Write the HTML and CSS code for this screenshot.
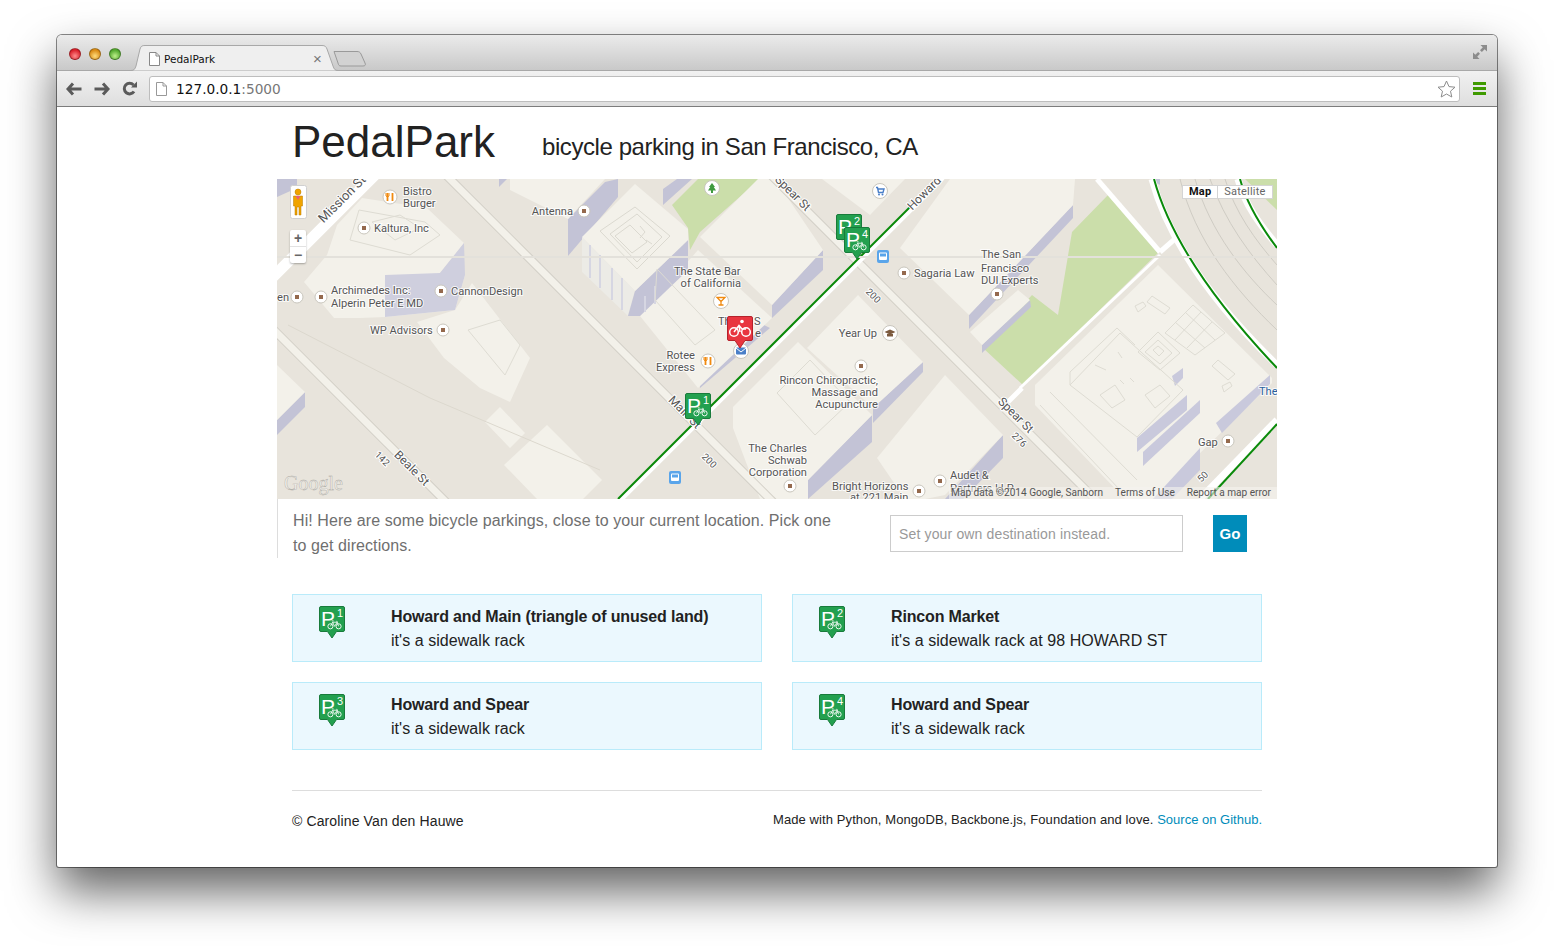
FILE: index.html
```html
<!DOCTYPE html>
<html lang="en">
<head>
    <meta charset="UTF-8">
    <title>PedalPark</title>
    <link rel="stylesheet" href="styles.css">
</head>
<body>
<div class="window">
    <!-- Browser chrome -->
    <div class="titlebar">
        <div class="lights">
            <span class="light red"></span>
            <span class="light yellow"></span>
            <span class="light green"></span>
        </div>
        <div class="tab">
            <svg class="tab-shape" width="212" height="26" viewBox="0 0 212 26"><path d="M0 25.500H1C4 25.500 5 24 6 21L10 4C11 1 12 .5 15 .5H192C195 .5 196 1.500 197 4L203 21C204 24 205 25.500 208 25.500H212" fill="#efefef" stroke="#a8a8a8"/></svg>
            <svg class="page-icon" width="11" height="14" viewBox="0 0 11 14"><path d="M.5.5H7L10.500 4V13.500H.5z" fill="#fff" stroke="#888"/><path d="M7 .5V4H10.500" fill="none" stroke="#888"/></svg>
            <span class="tab-title">PedalPark</span>
            <span class="tab-close">×</span>
        </div>
        <svg class="new-tab" width="34" height="17" viewBox="0 0 34 17"><path d="M1 1.500H24C26 1.500 27 2 28 4L32 13C33 15 32 16 30 16H8C6 16 5.500 15 5 13z" fill="#d2d2d2" stroke="#9a9a9a"/></svg>
        <svg class="fullscreen" width="14" height="14" viewBox="0 0 15 15"><path d="M15 0V7L12.500 4.500L9.500 7.500L7.500 5.500L10.500 2.500L8 0z" fill="#8c8c8c"/><path d="M0 15V8L2.500 10.500L5.500 7.500L7.500 9.500L4.500 12.500L7 15z" fill="#8c8c8c"/></svg>
    </div>
    <div class="toolbar">
        <svg class="nav-icon" width="16" height="14" viewBox="0 0 16 14"><path d="M7 1.500L2 7L7 12.500M2.500 7H15.500" fill="none" stroke="#5a5a5a" stroke-width="3"/></svg>
        <svg class="nav-icon" width="16" height="14" viewBox="0 0 16 14"><path d="M9 1.500L14 7L9 12.500M13.500 7H.5" fill="none" stroke="#5a5a5a" stroke-width="3"/></svg>
        <svg class="nav-icon" width="15" height="15" viewBox="0 0 15 15"><path d="M12 10.500A5.300 5.300 0 1 1 11.500 4" fill="none" stroke="#5a5a5a" stroke-width="3"/><path d="M9 6.500H15V.5z" fill="#5a5a5a"/></svg>
        <div class="omnibox">
            <svg class="page-icon-url" width="11" height="14" viewBox="0 0 11 14"><path d="M.5.5H7L10.500 4V13.500H.5z" fill="#fff" stroke="#999"/><path d="M7 .5V4H10.500" fill="none" stroke="#999"/></svg>
            <span class="url">127.0.0.1<span class="url-port">:5000</span></span>
            <svg class="star" width="19" height="18" viewBox="0 0 19 18"><path d="M9.500 1L12 6.600L18 7.200L13.500 11.200L14.800 17L9.500 14L4.200 17L5.500 11.200L1 7.200L7 6.600z" fill="#fff" stroke="#8c8c8c"/></svg>
        </div>
        <div class="menu-icon"><span></span><span></span><span></span></div>
    </div>

    <!-- Page -->
    <div class="page">
        <header class="header">
            <h1>PedalPark</h1>
            <h2>bicycle parking in San Francisco, CA</h2>
        </header>

        <div class="map">
            <svg class="map-canvas" width="1000" height="320" viewBox="277 179 1000 320">
                <defs>
                    <symbol id="bike" viewBox="0 0 16 11" overflow="visible">
                        <circle cx="3.500" cy="7.500" r="2.800" fill="none" stroke="#fff"/>
                        <circle cx="12.500" cy="7.500" r="2.800" fill="none" stroke="#fff"/>
                        <path d="M3.500 7.500L6 3H11L12.500 7.500M6 3L8 7.500L11 3M5 1.500H7M10.500 1.500L11 3" fill="none" stroke="#fff" stroke-width=".9"/>
                    </symbol>
                    <symbol id="pin" viewBox="0 0 26 33" overflow="visible">
                        <path d="M2 .5H24A1.500 1.500 0 0 1 25.500 2V24A1.500 1.500 0 0 1 24 25.500H17.500L13 32L8.500 25.500H2A1.500 1.500 0 0 1 .5 24V2A1.500 1.500 0 0 1 2 .5z" fill="#23a04f" stroke="#187b3b"/>
                        <use href="#bike" x="8" y="13.500" width="15" height="10"/>
                    </symbol>
                    <symbol id="dot" viewBox="-7 -7 14 14" overflow="visible">
                        <circle r="6" fill="#fff" stroke="#c9c6bd"/>
                        <rect x="-2" y="-2" width="4" height="4" fill="#94694d"/>
                    </symbol>
                    <symbol id="fork" viewBox="-7 -7 14 14" overflow="visible">
                        <circle r="7" fill="#fff" stroke="#c9c6bd"/>
                        <path d="M-2.500 -4V4M2.500 -4V4" stroke="#f08a10" stroke-width="1.800"/>
                        <path d="M-4 -4V-1L-2.500 0L-1 -1V-4" fill="none" stroke="#f08a10"/>
                    </symbol>
                    <symbol id="bus" viewBox="-6 -7 12 14" overflow="visible">
                        <rect x="-6" y="-7" width="12" height="13" rx="2" fill="#5aa5ea"/>
                        <rect x="-4" y="-4.500" width="8" height="7.500" rx="1" fill="#fff"/>
                        <rect x="-3" y="-3.500" width="6" height="3" fill="#5aa5ea"/>
                    </symbol>
                </defs>

                <rect x="277" y="179" width="1000" height="320" fill="#e8e4dc"/>

                <!-- parks -->
                <g fill="#cbdeaa">
                    <path d="M672 205L698 179H760L700 232L690 250L688 228z"/>
                    <path d="M1108 195L1158 253L1023 385L983 348L1032 295L1058 315L1072 232z"/>
                    <path d="M1245 179H1277V210z"/>
                </g>

                <!-- building faces -->
                <g fill="#c3c3d6">
                    <path d="M277 179H297V188L277 197z"/>
                    <path d="M499 179H507L499 187z"/>
                    <path d="M305 392V407L277 435V420z"/>
                    <path d="M568 219L605 182L618 179V197L568 256z"/>
                    <path d="M663 189L677 179H692L663 205z"/>
                    <path d="M823 250V270L772 318V305z"/>
                    <path d="M700 375L760 323L770 328L700 388z"/>
                    <path d="M872 415V442L808 499V480z"/>
                    <path d="M923 362V372L873 423V408z"/>
                    <path d="M1003 435V458L963 499H945z"/>
                    <path d="M1073 205L969 315V329L1073 218z"/>
                    <path d="M1030 300L982 345V353L1031 307z"/>
                    <path d="M1150 179H1160V185z"/>
                </g>

                <!-- buildings -->
                <g fill="#f3f1ea">
                    <path d="M304 282L327 255L337 225L362 198L427 208L464 243L440 273L465 275L455 310L385 317L360 318L334 318z"/>
                    <path d="M455 310L472 283L530 358L510 402L480 388L444 358L417 322z"/>
                    <path d="M485 422L500 407L525 433L510 448z"/>
                    <path d="M504 465L547 425L602 480L583 499H537z"/>
                    <path d="M277 365L305 392L277 420z"/>
                    <path d="M510 179H605L568 219L510 190z"/>
                    <path d="M700 237L758 179H775L823 250L772 305z"/>
                    <path d="M640 316L698 250L772 318L698 388z"/>
                    <path d="M733 407L798 342L872 415L808 480V499H760L733 428z"/>
                    <path d="M807 348L858 295L923 362L873 408z"/>
                    <path d="M877 458L945 375L1003 435L945 495L925 499H905z"/>
                    <path d="M950 179H1075L1073 205L969 315L900 248z"/>
                    <path d="M1030 300L982 345L970 332L1018 290z"/>
                    <path d="M822 179H905L870 215z"/>
                    <path d="M1035 385L1158 265L1272 378V383L1153 499H1125L1035 405z"/>
                </g>

                <!-- Kaltura block walls -->
                <path d="M385 275L440 273L464 243L465 275L455 310L385 317z" fill="#cfcfde"/>

                <!-- tower next to the park -->
                <path d="M582 237L635 291L628 316L582 272z" fill="#ecebe6"/>
                <path d="M635 291L688 240V270L640 316H628z" fill="#c3c3d6"/>
                <path d="M582 237L635 184L688 229V240L635 291z" fill="#f3f1ea"/>
                <path d="M590 245V278M600 255V288M612 268V300M622 278V310M645 296V312M655 286V304" fill="none" stroke="#d6d6e2" stroke-width="2"/>
                <g fill="none" stroke="#dbd9d0">
                    <path d="M600 231L635 207L670 236L637 269z"/>
                    <path d="M610 234L637 214L662 237L637 262z"/>
                    <path d="M615 236L630 225L647 242L632 253z"/>
                    <path d="M640 226L645 232L640 238M646 240L652 244"/>
                </g>

                <!-- big block faces -->
                <g fill="#c9c9dc">
                    <path d="M1137 438L1187 395V410L1137 452z"/>
                    <path d="M1143 452L1200 400V413L1143 466z"/>
                    <path d="M1270 375V384L1222 433L1216 423z"/>
                    <path d="M1200 448V470L1172 499H1153z"/>
                    <path d="M1172 376L1183 368V378L1175 386z"/>
                </g>

                <!-- building detail lines -->
                <g fill="none" stroke="#dedcd3">
                    <path d="M1070 385L1120 333L1183 390L1137 437z"/>
                    <path d="M1070 372L1117 328L1135 345"/>
                    <path d="M1070 372V385M1050 392L1137 480M1040 405L1120 490"/>
                    <path d="M1193 305L1225 333L1195 355L1165 333z"/>
                    <path d="M1185 312L1215 340M1175 322L1205 348M1201 312L1175 340M1212 322L1187 348"/>
                    <path d="M1138 352L1158 332L1180 353L1160 370z"/>
                    <path d="M1145 352L1158 340L1172 353L1160 364z"/>
                    <path d="M1153 350L1158 346L1164 351L1159 356z"/>
                    <path d="M1152 296L1170 308L1165 314L1147 302z"/>
                    <path d="M1135 306L1143 302L1146 306L1138 312z"/>
                    <path d="M1218 360L1235 374L1228 380L1212 366z"/>
                    <path d="M1222 386L1230 382L1232 386L1224 392z"/>
                    <path d="M1100 395L1115 385L1125 400L1112 408z"/>
                    <path d="M1145 395L1160 385L1170 396L1155 408z"/>
                    <path d="M1095 365L1106 370M1118 352L1122 358M1120 380L1124 384M1130 378L1134 382"/>
                    <path d="M777 393L810 360L850 402L815 435z"/>
                    <path d="M359 210L425 222L440 235L410 255L350 240z"/>
                    <path d="M372 222L400 215L420 228L395 240z"/>
                    <path d="M468 330L500 320L520 345L505 375z"/>
                    <path d="M657 269L715 330L695 345L655 300z"/>
                    <path d="M288 325L430 398L600 470" stroke="#dcd8ce"/>
                </g>

                <!-- streets -->
                <g fill="none" stroke-linecap="butt">
                    <path d="M440 169L790 519" stroke="#d2cfc7" stroke-width="9"/>
                    <path d="M440 169L790 519" stroke="#f3f1ea" stroke-width="7"/>
                    <path d="M765 169L1110 514" stroke="#d2cfc7" stroke-width="9"/>
                    <path d="M765 169L1110 514" stroke="#f3f1ea" stroke-width="7"/>
                    <path d="M267 323L453 509" stroke="#d2cfc7" stroke-width="9"/>
                    <path d="M267 323L453 509" stroke="#f3f1ea" stroke-width="7"/>
                    <path d="M267 283L381 169" stroke="#fff" stroke-width="11"/>
                    <path d="M1097 179L1160 252" stroke="#fff" stroke-width="5"/>
                    <path d="M1160 252L1176 238" stroke="#fff" stroke-width="5"/>
                    <path d="M1160 255L1020 388" stroke="#fff" stroke-width="3"/>
                    <path d="M1022 388L1008 402" stroke="#fff" stroke-width="5"/>
                    <!-- Howard -->
                    <path d="M620 501L943 178" stroke="#fff" stroke-width="4"/>
                    <path d="M618 499L910 207" stroke="#0a8a0a" stroke-width="2"/>
                    <!-- freeway -->
                    <g stroke="#fff" stroke-width="7">
                        <path d="M1152 179C1170 245 1220 310 1277 365"/>
                        <path d="M1238 179C1245 205 1260 225 1277 245"/>
                        <path d="M1277 420L1200 499"/>
                    </g>
                    <g stroke="#0a8a0a" stroke-width="2">
                        <path d="M1154 179C1172 245 1222 310 1277 368"/>
                        <path d="M1240 179C1247 205 1262 228 1277 248"/>
                        <path d="M1277 424L1208 499"/>
                    </g>
                    <g stroke="#cfccc4">
                        <path d="M1180 179C1195 240 1235 290 1277 330"/>
                        <path d="M1195 179C1210 232 1245 275 1277 305"/>
                        <path d="M1210 179C1225 222 1250 255 1277 285"/>
                        <path d="M1225 179C1235 212 1255 240 1277 265"/>
                    </g>
                    <path d="M277 257H1277" stroke="#e3e1db" stroke-width="2"/>
                </g>

                <!-- road names -->
                <g class="road-labels">
                    <text transform="translate(345 202) rotate(-45)" text-anchor="middle" class="road-name">Mission St</text>
                    <text transform="translate(927 196) rotate(-45)" text-anchor="middle">Howard</text>
                    <text transform="translate(790 196) rotate(45)" text-anchor="middle">Spear St</text>
                    <text transform="translate(682 415) rotate(45)" text-anchor="middle">Main St</text>
                    <text transform="translate(1013 418) rotate(45)" text-anchor="middle">Spear St</text>
                    <text transform="translate(409 471) rotate(45)" text-anchor="middle">Beale St</text>
                    <text transform="translate(380 461) rotate(45)" text-anchor="middle" class="road-no">142</text>
                    <text transform="translate(871 298) rotate(45)" text-anchor="middle" class="road-no">200</text>
                    <text transform="translate(707 463) rotate(45)" text-anchor="middle" class="road-no">200</text>
                    <text transform="translate(1017 442) rotate(45)" text-anchor="middle" class="road-no">276</text>
                    <text transform="translate(1205 479) rotate(-45)" text-anchor="middle" class="road-no">50</text>
                </g>

                <!-- places -->
                <g class="places">
                    <text x="403" y="195">Bistro</text>
                    <text x="403" y="207">Burger</text>
                    <text x="374" y="232">Kaltura, Inc</text>
                    <text x="573" y="215" text-anchor="end">Antenna</text>
                    <text x="331" y="294">Archimedes Inc:</text>
                    <text x="331" y="307">Alperin Peter E MD</text>
                    <text x="451" y="295">CannonDesign</text>
                    <text x="277" y="301">en</text>
                    <text x="370" y="334">WP Advisors</text>
                    <text x="674" y="275">The State Bar</text>
                    <text x="741" y="287" text-anchor="end">of California</text>
                    <text x="718" y="325">Th</text>
                    <text x="754" y="325">S</text>
                    <text x="755" y="337">e</text>
                    <text x="695" y="359" text-anchor="end">Rotee</text>
                    <text x="695" y="371" text-anchor="end">Express</text>
                    <text x="877" y="337" text-anchor="end">Year Up</text>
                    <text x="878" y="384" text-anchor="end">Rincon Chiropractic,</text>
                    <text x="878" y="396" text-anchor="end">Massage and</text>
                    <text x="878" y="408" text-anchor="end">Acupuncture</text>
                    <text x="807" y="452" text-anchor="end">The Charles</text>
                    <text x="807" y="464" text-anchor="end">Schwab</text>
                    <text x="807" y="476" text-anchor="end">Corporation</text>
                    <text x="832" y="490">Bright Horizons</text>
                    <text x="850" y="501">at 221 Main</text>
                    <text x="914" y="277">Sagaria Law</text>
                    <text x="981" y="258">The San</text>
                    <text x="981" y="272">Francisco</text>
                    <text x="981" y="284">DUI Experts</text>
                    <text x="950" y="479">Audet &amp;</text>
                    <text x="950" y="492">Partners LLP</text>
                    <text x="1198" y="446">Gap</text>
                    <text x="1259" y="395" class="transit">The</text>
                </g>

                <!-- place icons -->
                <use href="#dot" x="577" y="204" width="14" height="14"/>
                <use href="#dot" x="357" y="221" width="14" height="14"/>
                <use href="#dot" x="290" y="290" width="14" height="14"/>
                <use href="#dot" x="314" y="290" width="14" height="14"/>
                <use href="#dot" x="434" y="284" width="14" height="14"/>
                <use href="#dot" x="436" y="323" width="14" height="14"/>
                <use href="#dot" x="897" y="266" width="14" height="14"/>
                <use href="#dot" x="854" y="359" width="14" height="14"/>
                <use href="#dot" x="783" y="479" width="14" height="14"/>
                <use href="#dot" x="912" y="484" width="14" height="14"/>
                <use href="#dot" x="933" y="474" width="14" height="14"/>
                <use href="#dot" x="990" y="287" width="14" height="14"/>
                <use href="#dot" x="1221" y="434" width="14" height="14"/>
                <use href="#fork" x="383" y="190" width="14" height="14"/>
                <use href="#fork" x="701" y="354" width="14" height="14"/>
                <use href="#bus" x="877" y="250" width="12" height="14"/>
                <use href="#bus" x="669" y="471" width="12" height="14"/>
                <g transform="translate(712 188)">
                    <circle r="7.500" fill="#fff" stroke="#c9c6bd"/>
                    <path d="M0 -5L3 -1H1.800L4 2.500H1V5H-1V2.500H-4L-1.800 -1H-3z" fill="#3f9a3f"/>
                </g>
                <g transform="translate(880 191)">
                    <circle r="7.500" fill="#fff" stroke="#c9c6bd"/>
                    <path d="M-4 -3.500H-2.500L-1.500 1.500H3L4 -2H-2" fill="none" stroke="#4a7fc8" stroke-width="1.400"/>
                    <circle cx="-1" cy="3.500" r="1" fill="#4a7fc8"/>
                    <circle cx="2.500" cy="3.500" r="1" fill="#4a7fc8"/>
                </g>
                <g transform="translate(721 301)">
                    <circle r="7.500" fill="#fff" stroke="#c9c6bd"/>
                    <path d="M-4 -3.500H4L0 0.500zM0 0.500V4M-2.500 4H2.500" fill="none" stroke="#f08a10" stroke-width="1.300"/>
                </g>
                <g transform="translate(741 351)">
                    <circle r="7.500" fill="#fff" stroke="#c9c6bd"/>
                    <rect x="-5" y="-3.500" width="10" height="7" rx="1" fill="#4a7fc8"/>
                    <path d="M-5 -3L0 1L5 -3" fill="none" stroke="#fff"/>
                </g>
                <g transform="translate(890 333)">
                    <circle r="7.500" fill="#fff" stroke="#c9c6bd"/>
                    <path d="M-5.500 -1L0 -3.500L5.500 -1L0 1.500z" fill="#7c5a3e"/>
                    <path d="M-3 1V3.500H3V1" fill="#7c5a3e"/>
                </g>

                <!-- markers -->
                <use href="#pin" x="836" y="214" width="26" height="33"/>
                <text x="838" y="234" class="pin-p">P</text>
                <text x="854" y="225" class="pin-no">2</text>
                <use href="#pin" x="844" y="227" width="26" height="33"/>
                <text x="846" y="247" class="pin-p">P</text>
                <text x="862" y="238" class="pin-no">4</text>
                <use href="#pin" x="685" y="393" width="26" height="33"/>
                <text x="687" y="413" class="pin-p">P</text>
                <text x="703" y="404" class="pin-no">1</text>

                <g transform="translate(727 316)">
                    <path d="M2 .5H24A1.500 1.500 0 0 1 25.500 2V23A1.500 1.500 0 0 1 24 24.500H18L13 32L8 24.500H2A1.500 1.500 0 0 1 .5 23V2A1.500 1.500 0 0 1 2 .5z" fill="#e8353f" stroke="#b5222b"/>
                    <circle cx="7" cy="16" r="4.300" fill="none" stroke="#fff" stroke-width="1.500"/>
                    <circle cx="19" cy="16" r="4.300" fill="none" stroke="#fff" stroke-width="1.500"/>
                    <circle cx="15" cy="5.500" r="1.800" fill="#fff"/>
                    <path d="M7 16L12 9.500L15 13H19M12 9.500L13 16" fill="none" stroke="#fff" stroke-width="1.500"/>
                </g>

                <!-- street view -->
                <g transform="translate(290 185)">
                    <rect x=".5" y=".5" width="16" height="33" rx="2" fill="#fff" stroke="#d0d0d0"/>
                    <circle cx="8" cy="7" r="3" fill="#f0a400" stroke="#b87a00" stroke-width=".5"/>
                    <path d="M3.500 11H12.500V21H11V30H9V22H7V30H5V21H3.500z" fill="#f0a400" stroke="#b87a00" stroke-width=".5"/>
                    <path d="M5.500 11H10.500L8 15z" fill="#e8607a"/>
                </g>

                <text x="284" y="490" class="google-logo">Google</text>
            </svg>

            <div class="zoom-control">
                <span>+</span>
                <span>−</span>
            </div>
            <div class="map-type">
                <span class="map-type-on">Map</span>
                <span>Satellite</span>
            </div>
            <div class="attribution">
                <span>Map data ©2014 Google, Sanborn</span>
                <span>Terms of Use</span>
                <span>Report a map error</span>
            </div>
        </div>

        <div class="intro">
            <p>Hi! Here are some bicycle parkings, close to your current location. Pick one to get directions.</p>
            <input type="text" class="destination" placeholder="Set your own destination instead.">
            <button class="go">Go</button>
        </div>

        <div class="parkings">
            <div class="parking">
                <svg class="parking-pin" width="26" height="33" viewBox="0 0 26 33"><use href="#pin" width="26" height="33"/><text x="2" y="20" class="pin-p">P</text><text x="18" y="11" class="pin-no">1</text></svg>
                <div>
                    <b>Howard and Main (triangle of unused land)</b>
                    <span>it's a sidewalk rack</span>
                </div>
            </div>
            <div class="parking">
                <svg class="parking-pin" width="26" height="33" viewBox="0 0 26 33"><use href="#pin" width="26" height="33"/><text x="2" y="20" class="pin-p">P</text><text x="18" y="11" class="pin-no">2</text></svg>
                <div>
                    <b>Rincon Market</b>
                    <span>it's a sidewalk rack at 98 HOWARD ST</span>
                </div>
            </div>
            <div class="parking">
                <svg class="parking-pin" width="26" height="33" viewBox="0 0 26 33"><use href="#pin" width="26" height="33"/><text x="2" y="20" class="pin-p">P</text><text x="18" y="11" class="pin-no">3</text></svg>
                <div>
                    <b>Howard and Spear</b>
                    <span>it's a sidewalk rack</span>
                </div>
            </div>
            <div class="parking">
                <svg class="parking-pin" width="26" height="33" viewBox="0 0 26 33"><use href="#pin" width="26" height="33"/><text x="2" y="20" class="pin-p">P</text><text x="18" y="11" class="pin-no">4</text></svg>
                <div>
                    <b>Howard and Spear</b>
                    <span>it's a sidewalk rack</span>
                </div>
            </div>
        </div>

        <footer class="footer">
            <span class="credit">© Caroline Van den Hauwe</span>
            <span class="made-with">Made with Python, MongoDB, Backbone.js, Foundation and love. <a href="#">Source on Github.</a></span>
        </footer>
    </div>
</div>
</body>
</html>
```

FILE: styles.css
```css
/* Global */
body {
    margin: 0;
    height: 946px;
    overflow: hidden;
    background-color: #fff;
    font-family: "Liberation Sans", Arial, sans-serif;
    color: #222;
}

/* Browser window */
.window {
    margin: 35px 57px 0;
    height: 832px;
    box-sizing: border-box;
    border-radius: 5px 5px 2px 2px;
    box-shadow: 0 24px 48px rgba(0, 0, 0, 0.62), 0 0 0 1px #8a8a8a;
    background-color: #fff;
    display: flex;
    flex-direction: column;
}

.titlebar {
    height: 36px;
    flex: none;
    display: flex;
    align-items: flex-end;
    background: linear-gradient(#ebebeb, #c9c9c9);
    border-radius: 5px 5px 0 0;
    border-bottom: 1px solid #a8a8a8;
    box-sizing: border-box;
    position: relative;
}

.lights {
    display: flex;
    gap: 8px;
    padding: 3px 0 0 12px;
    align-self: center;
}

.light {
    width: 12px;
    height: 12px;
    border-radius: 50%;
    box-sizing: border-box;
    border: 1px solid rgba(0, 0, 0, 0.3);
}

.red { background: radial-gradient(circle at 50% 70%, #ff8d8d, #d9202a 70%); }
.yellow { background: radial-gradient(circle at 50% 70%, #ffdc7c, #d98a14 70%); }
.green { background: radial-gradient(circle at 50% 70%, #bdf08a, #52a82e 70%); }

.tab {
    width: 203px;
    height: 26px;
    box-sizing: border-box;
    padding-top: 2px;
    margin: 0 0 -1px 9px;
    position: relative;
    display: flex;
    align-items: center;
    flex: none;
}

.tab-shape {
    position: absolute;
    left: 0;
    top: 0;
}

.page-icon {
    position: relative;
    margin-left: 19px;
}

.tab-title {
    position: relative;
    margin-left: 4px;
    font-family: "DejaVu Sans", sans-serif;
    font-size: 10.500px;
    color: #111;
}

.tab-close {
    position: absolute;
    left: 183px;
    top: 5px;
    font-size: 15px;
    color: #777;
}

.new-tab {
    margin: 0 0 3px 0;
    flex: none;
}

.fullscreen {
    margin: 0 10px 11px auto;
    flex: none;
}

.toolbar {
    height: 36px;
    flex: none;
    display: flex;
    align-items: center;
    box-sizing: border-box;
    padding: 0 11px 0 9px;
    gap: 12px;
    background: linear-gradient(#f1f1f1, #dedede);
    border-bottom: 1px solid #7c7c7c;
}

.nav-icon {
    flex: none;
}

.omnibox {
    flex: 1;
    height: 26px;
    box-sizing: border-box;
    display: flex;
    align-items: center;
    background-color: #fff;
    border: 1px solid #bdbdbd;
    border-radius: 3px;
    padding: 0 3px 0 6px;
}

.url {
    margin-left: 9px;
    font-family: "DejaVu Sans", sans-serif;
    font-size: 13.700px;
    color: #111;
}

.url-port {
    color: #777;
}

.star {
    margin-left: auto;
}

.menu-icon {
    width: 13px;
    margin-left: 1px;
    display: flex;
    flex-direction: column;
    gap: 2px;
}

.menu-icon span {
    height: 3px;
    background-color: #3f9a00;
}

/* Page */
.page {
    width: 1000px;
    margin: 0 auto;
}

.header {
    display: flex;
    align-items: baseline;
    height: 72px;
    padding-left: 15px;
}

h1 {
    margin: 6px 0 0;
    font-size: 44px;
    font-weight: normal;
    line-height: 58px;
    color: #222;
}

h2 {
    margin: 0 0 0 47px;
    position: relative;
    top: -2px;
    font-size: 24px;
    font-weight: normal;
    letter-spacing: -0.42px;
    color: #222;
}

/* Map */
.map {
    position: relative;
    height: 320px;
    overflow: hidden;
}

.map-canvas {
    display: block;
}

.places text {
    font-family: Roboto, sans-serif;
    font-size: 11.100px;
    fill: #555;
    paint-order: stroke;
    stroke: rgba(255, 255, 255, 0.8);
    stroke-width: 2px;
}

.places .transit {
    fill: #2a5f9e;
}

.road-labels text {
    font-family: Roboto, sans-serif;
    font-size: 12px;
    fill: #555;
    paint-order: stroke;
    stroke: #fff;
    stroke-width: 2px;
}

.road-labels .road-no {
    font-size: 9.500px;
}

.road-labels .road-name {
    font-size: 13px;
}

.pin-p {
    font-family: "Liberation Sans", sans-serif;
    font-size: 21px;
    fill: #fff;
}

.pin-no {
    font-family: "Liberation Sans", sans-serif;
    font-size: 11px;
    fill: #fff;
}

.google-logo {
    font-family: "Liberation Serif", serif;
    font-size: 20px;
    fill: #f2f0ea;
    stroke: #a8a69f;
    stroke-width: 0.400px;
}

.zoom-control {
    position: absolute;
    left: 13px;
    top: 51px;
    width: 16px;
    background-color: #fff;
    border-radius: 2px;
    box-shadow: 0 1px 2px rgba(0, 0, 0, 0.3);
    color: #666;
    font-size: 14px;
    font-weight: bold;
    line-height: 16px;
    text-align: center;
}

.zoom-control span {
    display: block;
    height: 16px;
}

.zoom-control span + span {
    border-top: 1px solid #e2e2e2;
}

.map-type {
    position: absolute;
    left: 905px;
    top: 6px;
    display: flex;
    background-color: #fff;
    border: 1px solid #d4d4d4;
    font-family: Roboto, sans-serif;
    font-size: 11px;
    line-height: 12px;
    color: #666;
}

.map-type span {
    padding: 0 6px;
    letter-spacing: 0.2px;
}

.map-type .map-type-on {
    color: #111;
    font-weight: bold;
    border-right: 1px solid #d4d4d4;
}

.attribution {
    position: absolute;
    right: 0;
    bottom: 0;
    display: flex;
    gap: 12px;
    padding: 0 6px 0 2px;
    background-color: rgba(245, 243, 238, 0.6);
    font-family: Roboto, sans-serif;
    font-size: 10.100px;
    line-height: 12px;
    color: #555;
}

/* Intro */
.intro {
    display: flex;
    align-items: flex-start;
    height: 59px;
    box-sizing: border-box;
    border-left: 1px solid #ddd;
    padding: 9px 30px 0 15px;
}

.intro p {
    width: 550px;
    margin: 0;
    flex: none;
    font-size: 16px;
    line-height: 25px;
    letter-spacing: 0.08px;
    color: #6f6f6f;
}

.destination {
    width: 293px;
    height: 37px;
    box-sizing: border-box;
    margin: 7px 0 0 47px;
    padding: 0 8px;
    border: 1px solid #ccc;
    font-family: "Liberation Sans", sans-serif;
    font-size: 14px;
    letter-spacing: 0.15px;
    flex: none;
}

.destination::placeholder {
    color: #999;
}

.go {
    width: 34px;
    height: 37px;
    margin: 7px 0 0 30px;
    padding: 0;
    border: none;
    background-color: #008cba;
    color: #fff;
    font-family: "Liberation Sans", sans-serif;
    font-size: 15px;
    font-weight: bold;
    flex: none;
}

/* Parking list */
.parkings {
    display: grid;
    grid-template-columns: 470px 470px;
    gap: 20px 30px;
    margin: 36px 15px 0;
}

.parking {
    height: 68px;
    box-sizing: border-box;
    display: flex;
    border: 1px solid #b9ebfa;
    background-color: #ebf8fe;
    font-size: 16px;
    line-height: 24px;
    color: #222;
}

.parking-pin {
    flex: none;
    margin: 11px 46px 0 26px;
}

.parking > div {
    padding-top: 10px;
}

.parking b,
.parking span {
    display: block;
}

.parking b {
    letter-spacing: -0.15px;
}

.parking span {
    letter-spacing: 0.05px;
}

/* Footer */
.footer {
    display: flex;
    justify-content: space-between;
    margin: 40px 15px 0;
    padding-top: 20px;
    border-top: 1px solid #ddd;
    color: #222;
}

.credit {
    font-size: 14px;
    line-height: 20px;
    letter-spacing: 0.12px;
}

.made-with {
    font-size: 13px;
    line-height: 17px;
    letter-spacing: 0.09px;
}

.made-with a {
    color: #008cba;
    text-decoration: none;
    letter-spacing: 0;
}
```
